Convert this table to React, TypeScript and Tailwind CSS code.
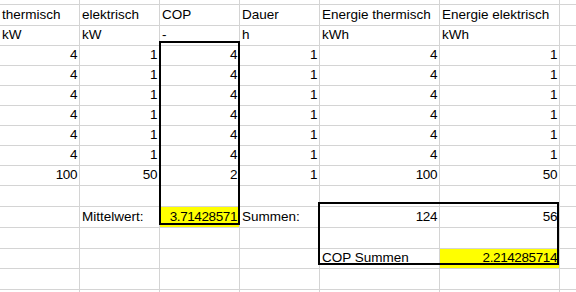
import React from "react";

type Cell = { t?: string; r?: boolean; y?: boolean };

const E: Cell = {};
const num = (t: string): Cell => ({ t, r: true });
const txt = (t: string): Cell => ({ t });

const rows: { h: string; cells: Cell[] }[] = [
  { h: "h-[2px]", cells: [E, E, E, E, E, E, E] },
  {
    h: "h-[21px]",
    cells: [
      txt("thermisch"),
      txt("elektrisch"),
      txt("COP"),
      txt("Dauer"),
      txt("Energie thermisch"),
      txt("Energie elektrisch"),
      E,
    ],
  },
  {
    h: "h-[20px]",
    cells: [txt("kW"), txt("kW"), txt("-"), txt("h"), txt("kWh"), txt("kWh"), E],
  },
  ...Array.from({ length: 6 }, () => ({
    h: "h-[20px]",
    cells: [num("4"), num("1"), num("4"), num("1"), num("4"), num("1"), E],
  })),
  {
    h: "h-[20px]",
    cells: [num("100"), num("50"), num("2"), num("1"), num("100"), num("50"), E],
  },
  { h: "h-[21px]", cells: [E, E, E, E, E, E, E] },
  {
    h: "h-[21px]",
    cells: [
      E,
      txt("Mittelwert:"),
      { t: "3.71428571", r: true, y: true },
      txt("Summen:"),
      num("124"),
      num("56"),
      E,
    ],
  },
  { h: "h-[21px]", cells: [E, E, E, E, E, E, E] },
  {
    h: "h-[20px]",
    cells: [E, E, E, E, txt("COP Summen"), { t: "2.214285714", r: true, y: true }, E],
  },
  { h: "h-[21px]", cells: [E, E, E, E, E, E, E] },
  { h: "h-[21px]", cells: [E, E, E, E, E, E, E] },
];

export default function App() {
  return (
    <div className="relative w-[576px] h-[292px] overflow-hidden bg-white text-black font-['Liberation_Sans',Arial,sans-serif] text-[13.5px]">
      <div className="grid grid-cols-[80px_80px_80px_80px_120px_120px_1fr]">
        {rows.map((row, ri) =>
          row.cells.map((c, ci) => (
            <div
              key={ri + "-" + ci}
              className={
                row.h +
                " flex items-end overflow-visible whitespace-nowrap border-b border-[#d4d4d4] leading-none pb-[4px] px-[2px] " +
                (ci < 6 ? "border-r " : "") +
                (c.r ? "justify-end " : "justify-start ") +
                (c.y ? "bg-[#ffff00] " : "")
              }
            >
              {c.t ? (
                <span className={c.r ? "tracking-[-0.4px]" : ""}>{c.t}</span>
              ) : null}
            </div>
          ))
        )}
      </div>
      <div className="pointer-events-none absolute left-[159px] top-[41px] w-[81px] h-[184px] border-2 border-black" />
      <div className="pointer-events-none absolute left-[318px] top-[202px] w-[241px] h-[63px] border-2 border-black" />
    </div>
  );
}
